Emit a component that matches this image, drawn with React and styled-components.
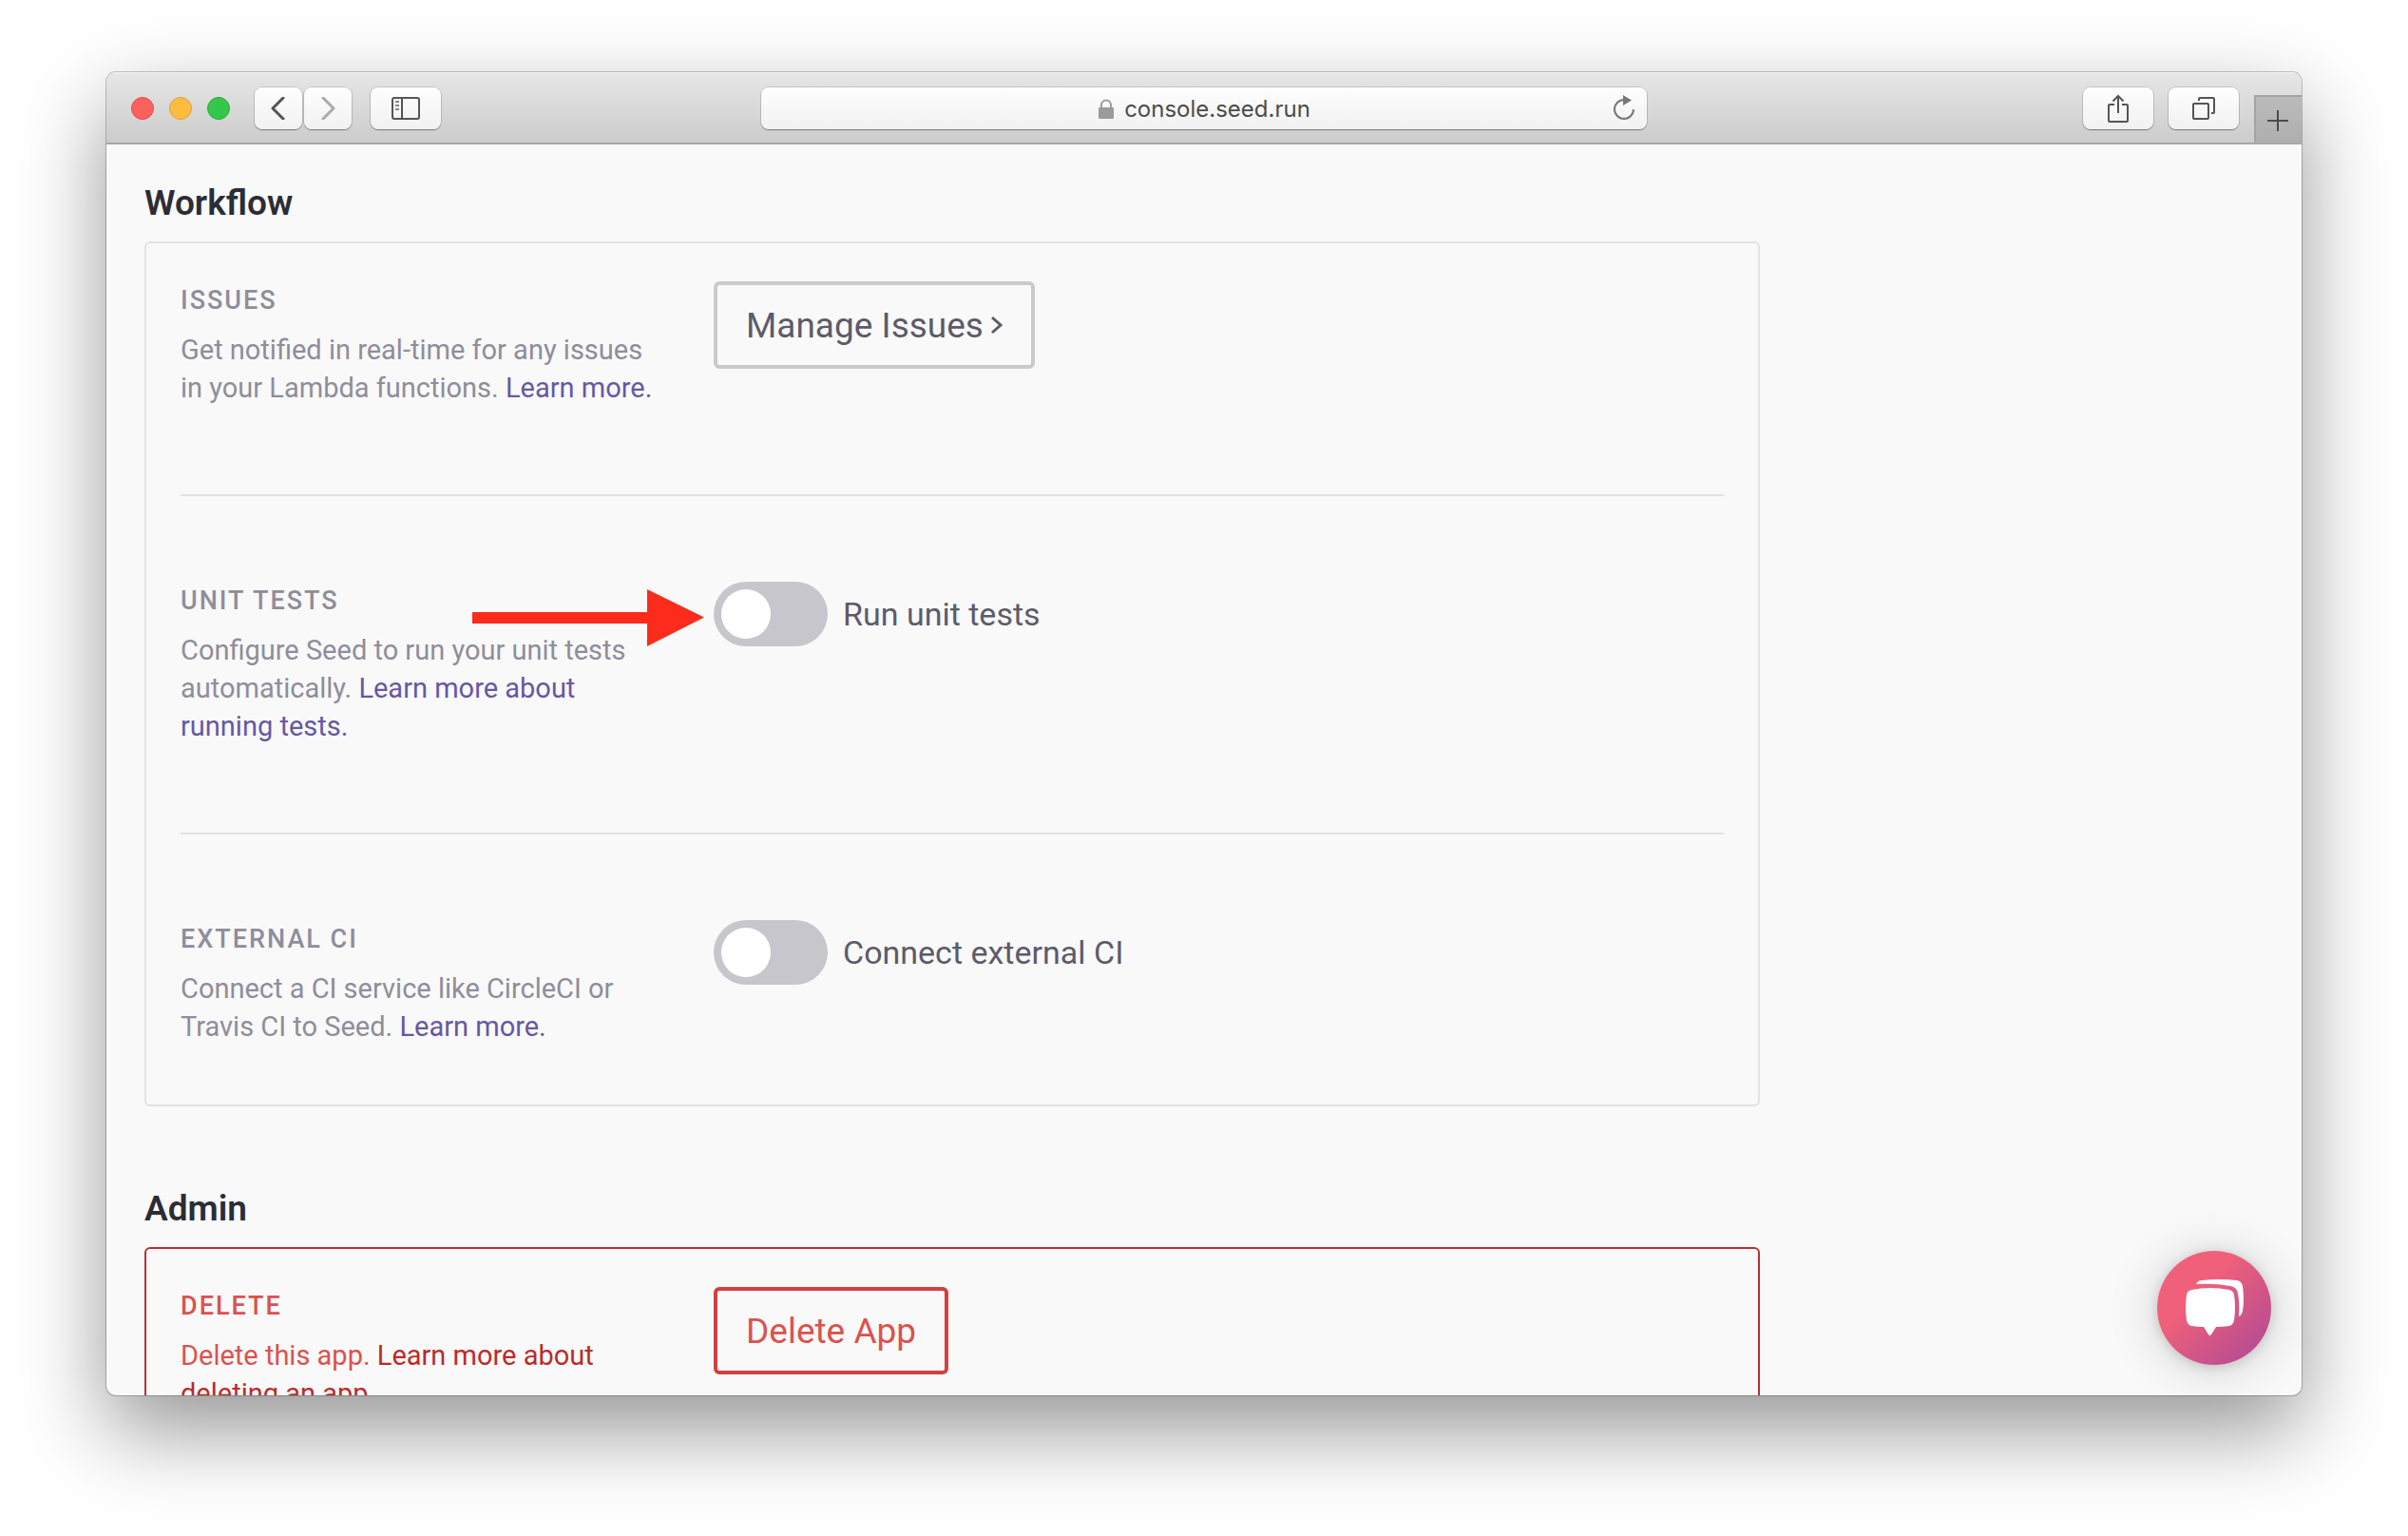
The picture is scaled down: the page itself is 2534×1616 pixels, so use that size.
import styled, { createGlobalStyle } from 'styled-components';

const GlobalStyle = createGlobalStyle`
  * {
    box-sizing: border-box;
  }

  body {
    margin: 0;
    background-color: #fff;
    font-family: Roboto, 'Liberation Sans', sans-serif;
  }

  button,
  input {
    font-family: inherit;
  }
`;

const Page = styled.div`
  height: 100vh;
  padding: 76px 112px 148px;
`;

const Window = styled.div`
  height: 100%;
  display: flex;
  flex-direction: column;
  position: relative;
  overflow: hidden;
  border-radius: 10px;
  background-color: #f9f9f9;
  box-shadow: 0 0 0 1px rgba(0, 0, 0, 0.22), 0 36px 90px rgba(0, 0, 0, 0.42);
`;

const Toolbar = styled.header`
  height: 76px;
  flex-shrink: 0;
  display: grid;
  grid-template-columns: 1fr 932px 1fr;
  align-items: center;
  border-top: 1px solid #f5f5f5;
  border-bottom: 2px solid #a8a8a8;
  background: linear-gradient(#e6e6e6, #cccccc);
`;

const ToolbarLeft = styled.div`
  display: flex;
  align-items: center;
  padding-left: 26px;
`;

const Lights = styled.div`
  display: flex;
  gap: 16px;
  margin-right: 26px;
`;

const Light = styled.span`
  width: 24px;
  height: 24px;
  border-radius: 50%;
  border: 1px solid ${(props) => props.$edge};
  background-color: ${(props) => props.$bg};
`;

const ToolButton = styled.button`
  width: ${(props) => (props.$small ? '50px' : '74px')};
  height: 44px;
  margin-right: ${(props) => props.$space || '0'};
  padding: 0;
  display: flex;
  align-items: center;
  justify-content: center;
  border: none;
  border-radius: 8px;
  background: linear-gradient(#fefefe, #f1f1f1);
  box-shadow: 0 0 0 1px rgba(0, 0, 0, 0.12), 0 1px 1px rgba(0, 0, 0, 0.35);
  color: ${(props) => (props.disabled ? '#ababab' : '#555')};
`;

const AddressBar = styled.div`
  height: 44px;
  display: grid;
  grid-template-columns: 48px 1fr 48px;
  align-items: center;
  border-radius: 8px;
  background: linear-gradient(#fefefe, #f1f1f1);
  box-shadow: 0 0 0 1px rgba(0, 0, 0, 0.12), 0 1px 1px rgba(0, 0, 0, 0.35);
`;

const Address = styled.label`
  grid-column: 2;
  display: flex;
  align-items: center;
  justify-content: center;
  gap: 10px;
  padding-top: 2px;
`;

const AddressInput = styled.input`
  field-sizing: content;
  padding: 0;
  border: none;
  outline: none;
  background: none;
  color: #4c4c4c;
  font-family: Inter, sans-serif;
  font-size: 24px;
  line-height: 32px;
`;

const ReloadButton = styled.button`
  height: 44px;
  padding: 0;
  display: flex;
  align-items: center;
  justify-content: center;
  border: none;
  background: none;
  color: #777;
`;

const ToolbarRight = styled.div`
  height: 100%;
  display: flex;
  align-items: center;
  justify-content: flex-end;
`;

const NewTab = styled.button`
  width: 50px;
  height: 50px;
  align-self: flex-end;
  padding: 4px 0 0;
  display: flex;
  align-items: center;
  justify-content: center;
  border: none;
  background: linear-gradient(#bcbcbc, #aeaeae);
  box-shadow: inset 2px 2px #a4a4a4;
  color: #4c4c4c;
`;

const Content = styled.main`
  flex: 1;
  min-height: 0;
  overflow: hidden;
  padding: 40px;
`;

const Section = styled.section`
  max-width: 1700px;
  margin-bottom: 86px;
`;

const Heading = styled.h2`
  margin: 0 0 18px;
  color: #2d2c35;
  font-size: 37px;
  font-weight: 600;
  line-height: 44px;
`;

const Panel = styled.div`
  padding: 40px 36px 62px;
  border: 2px solid ${(props) => (props.$danger ? '#b92f33' : '#e2e2e2')};
  border-radius: 6px;
`;

const Setting = styled.div`
  display: grid;
  grid-template-columns: 501px 1fr;
  column-gap: 60px;
  align-items: start;
  position: relative;

  & + & {
    margin-top: 92px;
    padding-top: 90px;
    border-top: 2px solid #e2e2e2;
  }
`;

const Title = styled.h3`
  margin: 0 0 12px;
  color: ${(props) => (props.$danger ? '#d9534f' : '#8f8d9b')};
  font-size: 27px;
  font-weight: 500;
  letter-spacing: 2px;
  line-height: 40px;
  text-transform: uppercase;
`;

const Desc = styled.p`
  margin: 0;
  color: ${(props) => (props.$danger ? '#d9534f' : '#8f8d9b')};
  font-size: 29px;
  line-height: 40px;
`;

const Link = styled.a`
  color: ${(props) => (props.$danger ? '#b92c2c' : '#6658a3')};
  text-decoration: none;
`;

const OutlineButton = styled.button`
  height: 92px;
  padding: 0 30px;
  display: inline-flex;
  align-items: center;
  gap: 8px;
  border: 4px solid ${(props) => (props.$danger ? '#d34040' : '#cacaca')};
  border-radius: 6px;
  background: none;
  color: ${(props) => (props.$danger ? '#d9534f' : '#5e5b69')};
  font-size: 37px;
`;

const SwitchLabel = styled.label`
  display: flex;
  align-items: center;
  gap: 16px;
  color: #5e5b69;
  font-size: 34px;
  line-height: 40px;
`;

const Switch = styled.input`
  appearance: none;
  width: 120px;
  height: 68px;
  margin: 0;
  padding: 8px;
  border-radius: 34px;
  background-color: #c7c6cc;

  &::before {
    content: '';
    display: block;
    width: 52px;
    height: 52px;
    border-radius: 50%;
    background-color: #fff;
  }

  &:checked::before {
    margin-left: auto;
  }
`;

const Pointer = styled.svg`
  position: absolute;
  left: 307px;
  bottom: 104px;
`;

const ChatButton = styled.button`
  position: absolute;
  right: 32px;
  bottom: 32px;
  width: 120px;
  height: 120px;
  padding: 0;
  border: none;
  border-radius: 50%;
  background: linear-gradient(135deg, #f0607a 35%, #b04a94 95%);
  box-shadow: 0 2px 12px rgba(0, 0, 0, 0.15), 0 4px 52px rgba(0, 0, 0, 0.18);
`;

const Chevron = ({ d }) => (
  <svg width="24" height="24" viewBox="0 0 24 24" fill="none" stroke="currentColor" strokeWidth="3">
    <path d={d} strokeLinecap="round" strokeLinejoin="round" />
  </svg>
);

const BrowserToolbar = () => (
  <Toolbar>
    <ToolbarLeft>
      <Lights>
        <Light $bg="#fc615d" $edge="#e24b48" />
        <Light $bg="#fdbc40" $edge="#dea034" />
        <Light $bg="#34c84a" $edge="#27aa35" />
      </Lights>
      <ToolButton $small $space="2px" aria-label="Back">
        <Chevron d="M17 1 6 12l11 11" />
      </ToolButton>
      <ToolButton $small $space="20px" disabled aria-label="Forward">
        <Chevron d="m7 1 11 11L7 23" />
      </ToolButton>
      <ToolButton aria-label="Sidebar">
        <svg width="30" height="24" viewBox="0 0 30 24" fill="none" stroke="currentColor" strokeWidth="2">
          <rect x="1" y="1" width="28" height="22" rx="2" />
          <path d="M11 1v22" />
          <path d="M4 5h4M4 9h4M4 13h4" stroke="#888" />
        </svg>
      </ToolButton>
    </ToolbarLeft>
    <AddressBar>
      <Address>
        <svg width="18" height="22" viewBox="0 0 18 22">
          <rect x="1" y="9" width="16" height="12" rx="1" fill="#9b9b9b" />
          <path d="M4 10V6.500a5 5 0 0 1 10 0V10" fill="none" stroke="#9b9b9b" strokeWidth="2" />
        </svg>
        <AddressInput defaultValue="console.seed.run" aria-label="Address" />
      </Address>
      <ReloadButton aria-label="Reload">
        <svg width="24" height="28" viewBox="0 0 24 28">
          <path d="M22 15a10 10 0 1 1-10-10" fill="none" stroke="currentColor" strokeWidth="2" />
          <path d="M11 0v11l9-5.500z" fill="currentColor" />
        </svg>
      </ReloadButton>
    </AddressBar>
    <ToolbarRight>
      <ToolButton $space="16px" aria-label="Share">
        <svg width="24" height="32" viewBox="0 0 24 32" fill="none" stroke="currentColor" strokeWidth="2">
          <path d="M8 12H3a1 1 0 0 0-1 1v16a1 1 0 0 0 1 1h18a1 1 0 0 0 1-1V13a1 1 0 0 0-1-1h-5M12 21V3M6.500 8.500 12 3l5.500 5.500" />
        </svg>
      </ToolButton>
      <ToolButton $space="16px" aria-label="Show tabs">
        <svg width="24" height="24" viewBox="0 0 24 24" fill="none" stroke="currentColor" strokeWidth="2">
          <rect x="1" y="7" width="16" height="16" rx="1" />
          <path d="M7 4V2a1 1 0 0 1 1-1h14a1 1 0 0 1 1 1v14a1 1 0 0 1-1 1h-2" />
        </svg>
      </ToolButton>
      <NewTab aria-label="New tab">
        <svg width="22" height="22" viewBox="0 0 22 22" stroke="currentColor" strokeWidth="2">
          <path d="M11 0v22M0 11h22" />
        </svg>
      </NewTab>
    </ToolbarRight>
  </Toolbar>
);

const App = () => {
  return (
    <Page>
      <GlobalStyle />
      <Window>
        <BrowserToolbar />
        <Content>
          <Section>
            <Heading>Workflow</Heading>
            <Panel>
              <Setting>
                <div>
                  <Title>Issues</Title>
                  <Desc>
                    Get notified in real-time for any issues in your Lambda functions.{' '}
                    <Link href="#issues">Learn more.</Link>
                  </Desc>
                </div>
                <div>
                  <OutlineButton>
                    Manage Issues
                    <svg width="12" height="20" viewBox="0 0 12 20" fill="none" stroke="currentColor" strokeWidth="3">
                      <path d="m1 2 9 8-9 8" />
                    </svg>
                  </OutlineButton>
                </div>
              </Setting>
              <Setting>
                <div>
                  <Title>Unit Tests</Title>
                  <Desc>
                    Configure Seed to run your unit tests automatically.{' '}
                    <Link href="#tests">Learn more about running tests.</Link>
                  </Desc>
                </div>
                <SwitchLabel>
                  <Switch type="checkbox" role="switch" />
                  Run unit tests
                </SwitchLabel>
                <Pointer width="244" height="60" viewBox="0 0 244 60" fill="#fc2b1c">
                  <path d="M0 24h184V0l60 29.500L184 60V36H0z" />
                </Pointer>
              </Setting>
              <Setting>
                <div>
                  <Title>External CI</Title>
                  <Desc>
                    Connect a CI service like CircleCI or Travis CI to Seed. <Link href="#ci">Learn more.</Link>
                  </Desc>
                </div>
                <SwitchLabel>
                  <Switch type="checkbox" role="switch" />
                  Connect external CI
                </SwitchLabel>
              </Setting>
            </Panel>
          </Section>
          <Section>
            <Heading>Admin</Heading>
            <Panel $danger>
              <Setting>
                <div>
                  <Title $danger>Delete</Title>
                  <Desc $danger>
                    Delete this app.{' '}
                    <Link $danger href="#delete">
                      Learn more about deleting an app.
                    </Link>
                  </Desc>
                </div>
                <div>
                  <OutlineButton $danger>Delete App</OutlineButton>
                </div>
              </Setting>
            </Panel>
          </Section>
        </Content>
        <ChatButton aria-label="Open chat">
          <svg width="120" height="120" viewBox="0 0 120 120" fill="#fff">
            <path d="M36 41q20-4 40 0q4 1 5 5q2 14 0 27q-1 5-5 6q-7 1-14 1l-5 8q-2 2-3 0l-5-8q-7 0-13-1q-4-1-5-6q-2-13 0-27q1-4 5-5z" />
            <path d="M41 35q2-4 6-4q18-2 37 0q5 1 6 6q2 15 0 26q-1 5-4 6q1-15-1-24q-1-7-8-8q-16-3-36-2z" />
          </svg>
        </ChatButton>
      </Window>
    </Page>
  );
};

export default App;
